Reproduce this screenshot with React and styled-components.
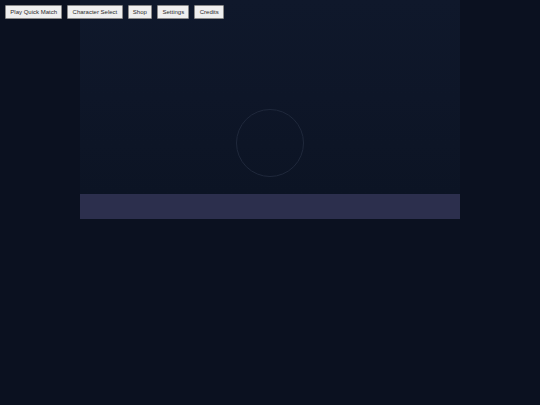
import React from 'react';
import styled, { createGlobalStyle } from 'styled-components';

const GlobalStyle = createGlobalStyle`
  html, body {
    margin: 0;
    padding: 0;
    background: #0b1120;
    font-family: "Liberation Sans", Arial, sans-serif;
  }
`;

const Page = styled.div`
  position: relative;
  width: 540px;
  height: 405px;
  background: #0b1120;
  overflow: hidden;
`;

const Menu = styled.nav`
  position: absolute;
  top: 5px;
  left: 5px;
  display: flex;
  gap: 5px;
  z-index: 2;
`;

const MenuButton = styled.button`
  height: 14px;
  padding: 0 4.3px;
  font-family: "Liberation Sans", Arial, sans-serif;
  font-size: 6px;
  color: #2a2a2a;
  background: #efefef;
  border: 1px solid #8a8a8a;
  border-radius: 1px;
  line-height: 12px;
  cursor: pointer;
`;

const Stage = styled.div`
  width: 380px;
  margin: 0 auto;
  display: flex;
  flex-direction: column;
`;

const Arena = styled.div`
  height: 194px;
  box-sizing: border-box;
  padding-top: 109px;
  background: linear-gradient(180deg, #0f182b 0%, #0e1628 50%, #0c1424 100%);
  display: flex;
  align-items: flex-start;
  justify-content: center;
`;

const Ring = styled.div`
  width: 68px;
  height: 68px;
  box-sizing: border-box;
  border-radius: 50%;
  border: 1px solid #1f283b;
`;

const Bar = styled.div`
  height: 25px;
  background: #2c2f4d;
`;

const items = ['Play Quick Match', 'Character Select', 'Shop', 'Settings', 'Credits'];

export default function App() {
  return (
    <>
      <GlobalStyle />
      <Page>
        <Menu>
          {items.map((label) => (
            <MenuButton key={label}>{label}</MenuButton>
          ))}
        </Menu>
        <Stage>
          <Arena>
            <Ring />
          </Arena>
          <Bar />
        </Stage>
      </Page>
    </>
  );
}
